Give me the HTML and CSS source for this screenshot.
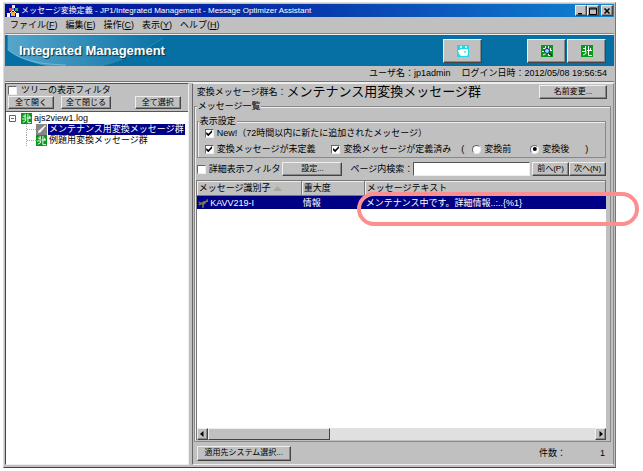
FILE: index.html
```html
<!doctype html>
<html lang="ja">
<head>
    <meta charset="UTF-8">
    <meta name="viewport" content="width=device-width, initial-scale=1.0">
    <title>メッセージ変換定義</title>

    <link rel="stylesheet" href="styles.css">
</head>
<body>

<svg class="defs" width="0" height="0">
    <symbol id="group" viewBox="0 0 12 12">
        <rect width="12" height="12" fill="#079a18"/>
        <path d="M2 3.500h3M4.500 1v5M1 6.500h4v2L2 10M7.500 1v9.500H11M6 5.500h5M9.500 3v3" stroke="#fff" fill="none"/>
    </symbol>
</svg>

<div class="window">
    <header class="titlebar">
        <svg class="app-icon" viewBox="0 0 12 12">
            <path d="M6 2v3M2 9l4-4 4 4" stroke="#eee" fill="none"/>
            <path d="M5 0h3v3H5z" fill="#f4e8b0"/>
            <path d="M2 3h3v3H2z" fill="#e04848"/>
            <path d="M8 3h3v3H8z" fill="#30b050"/>
            <path d="M0 8h3v4H0zM9 8h3v4H9z" fill="#fff"/>
            <path d="M4 7h4v4H4z" fill="#f0b030"/>
        </svg>
        <span class="title">メッセージ変換定義 - JP1/Integrated Management - Message Optimizer Assistant</span>
        <div class="window-buttons">
            <button aria-label="最小化"><svg viewBox="0 0 8 8"><path d="M1 6h4v1.500H1z"/></svg></button>
            <button aria-label="最大化"><svg viewBox="0 0 8 8"><path d="M.5 1h7v6.500h-7zM.5 2h7" fill="none" stroke="#000"/></svg></button>
            <button class="close" aria-label="閉じる"><svg viewBox="0 0 8 8"><path d="M1.500 1.500l5 5M6.500 1.500l-5 5" stroke="#000" stroke-width="1.500"/></svg></button>
        </div>
    </header>

    <nav class="menu">
        <button>ファイル(<u>F</u>)</button>
        <button>編集(<u>E</u>)</button>
        <button>操作(<u>C</u>)</button>
        <button>表示(<u>Y</u>)</button>
        <button>ヘルプ(<u>H</u>)</button>
    </nav>

    <div class="banner">
        <svg class="swoosh" viewBox="0 0 170 32">
            <defs>
                <linearGradient id="shine">
                    <stop offset="0" stop-color="#70b8d8"/>
                    <stop offset="1" stop-color="#0870a4"/>
                </linearGradient>
            </defs>
            <path d="M0 0h165C145 14 125 26 98 32H40C22 28 8 22 0 15z" fill="url(#shine)" opacity=".75"/>
            <path d="M0 15c12 10 28 15 60 16" stroke="#74b9d7" fill="none"/>
            <path d="M98 30c25-5 45-15 62-27" stroke="#2b88b5" fill="none"/>
        </svg>
        <h1>Integrated Management</h1>
        <div class="tools">
            <button class="camera" aria-label="取得">
                <svg viewBox="0 0 12 12">
                    <rect width="12" height="12" fill="#20d8e8"/>
                    <path d="M1 5h2l1-1h7v5l-1 2H4L2 9z" fill="#fff"/>
                    <path d="M8 1h2v2H8zM3 1h2v2H3z" fill="#c8ffff"/>
                    <circle cx="8" cy="7" r="1" fill="#62d8e8"/>
                </svg>
            </button>
            <button aria-label="検索">
                <svg viewBox="0 0 12 12">
                    <use href="#group"/>
                    <circle cx="6" cy="6" r="2.500" fill="#9cdcff" stroke="#102060"/>
                    <path d="M8 8l3 3" stroke="#102060" stroke-width="1.500"/>
                </svg>
            </button>
            <button aria-label="メッセージ群"><svg viewBox="0 0 12 12"><use href="#group"/></svg></button>
        </div>
    </div>

    <div class="session">
        <span>ユーザ名：jp1admin</span>
        <span>ログイン日時：2012/05/08 19:56:54</span>
    </div>

    <div class="panes">
        <aside class="tree-pane">
            <div class="tree-tools">
                <label><input type="checkbox">ツリーの表示フィルタ</label>
                <div class="tree-buttons">
                    <button>全て開く</button>
                    <button>全て閉じる</button>
                    <button class="select-all">全て選択</button>
                </div>
            </div>
            <ul class="tree">
                <li>
                    <div class="node">
                        <svg class="toggle" viewBox="0 0 7 7"><path d="M.5.5h6v6h-6zM2 3.500h3" fill="none" stroke="#666"/></svg>
                        <svg class="icon" viewBox="0 0 12 12"><use href="#group"/></svg>
                        <span>ajs2view1.log</span>
                    </div>
                    <ul>
                        <li class="node">
                            <svg class="icon" viewBox="0 0 12 12">
                                <rect width="12" height="12" fill="#858585"/>
                                <path d="M2 10l1-3 7-6 1 1-6 7z" fill="#f4f4f4"/>
                            </svg>
                            <span class="selected">メンテナンス用変換メッセージ群</span>
                        </li>
                        <li class="node">
                            <svg class="icon" viewBox="0 0 12 12"><use href="#group"/></svg>
                            <span>例題用変換メッセージ群</span>
                        </li>
                    </ul>
                </li>
            </ul>
        </aside>

        <main class="main-pane">
            <div class="group-name">
                <span>変換メッセージ群名：</span>
                <strong>メンテナンス用変換メッセージ群</strong>
                <button>名前変更...</button>
            </div>

            <fieldset class="list">
                <legend>メッセージ一覧</legend>

                <fieldset class="display">
                    <legend>表示設定</legend>
                    <label><input type="checkbox" checked>New!（72時間以内に新たに追加されたメッセージ）</label>
                    <div class="options">
                        <label><input type="checkbox" checked>変換メッセージが未定義</label>
                        <label><input type="checkbox" checked>変換メッセージが定義済み</label>
                        <div class="sides">
                            <span>(</span>
                            <label><input type="radio" name="side">変換前</label>
                            <label class="after"><input type="radio" name="side" checked>変換後</label>
                            <span>)</span>
                        </div>
                    </div>
                </fieldset>

                <div class="search">
                    <label><input type="checkbox">詳細表示フィルタ</label>
                    <button class="setting">設定...</button>
                    <label for="find">ページ内検索：</label>
                    <input type="text" id="find">
                    <button>前へ(P)</button>
                    <button>次へ(N)</button>
                </div>

                <div class="messages">
                    <table>
                        <thead>
                        <tr>
                            <th class="col-id">メッセージ識別子 <i class="sort"></i></th>
                            <th class="col-level">重大度</th>
                            <th>メッセージテキスト</th>
                        </tr>
                        </thead>
                        <tbody>
                        <tr>
                            <td>
                                <svg class="wrench" viewBox="0 0 12 10"><path d="M0 3h2l2 1 3-2h2l2-2h1v3l-3 1v2H7v4H5V6L2 7H0l2-2z" fill="#75775c"/></svg>
                                KAVV219-I
                            </td>
                            <td>情報</td>
                            <td class="marked">メンテナンス中です。詳細情報..:..{%1}</td>
                        </tr>
                        </tbody>
                    </table>
                    <div class="scrollbar">
                        <button aria-label="左へ"><svg viewBox="0 0 8 8"><path d="M5.500 1v6L2 4z"/></svg></button>
                        <div class="thumb"></div>
                        <button class="right" aria-label="右へ"><svg viewBox="0 0 8 8"><path d="M2.500 1v6L6 4z"/></svg></button>
                    </div>
                </div>
            </fieldset>

            <footer>
                <button>適用先システム選択...</button>
                <span class="count">件数：</span>
                <span>1</span>
            </footer>
        </main>
    </div>
</div>

</body>
</html>
```
FILE: styles.css
```css
*,
*::before,
*::after {
    box-sizing: border-box;
}

body {
    margin: 0;
    padding: 2px 27px 3px 3px;
    background: #fff;
    color: #000;
    font: 9px/12px "Liberation Sans", "Noto Sans CJK JP", sans-serif;
    white-space: nowrap;
}

.defs {
    position: absolute;
}

svg {
    display: block;
    flex: none;
}

button {
    display: flex;
    align-items: center;
    justify-content: center;
    height: 14px;
    margin: 0;
    padding: 0 4px;
    border: 1px solid;
    border-color: #eee #444 #444 #eee;
    box-shadow: inset -1px -1px #888;
    background: #c0c0c0;
    color: #000;
    font: inherit;
    font-size: 8px;
    white-space: nowrap;
}

label {
    display: flex;
    align-items: center;
}

input[type=checkbox],
input[type=radio] {
    appearance: none;
    flex: none;
    width: 9px;
    height: 9px;
    margin: 0 3px 0 0;
    border: 1px solid;
    border-color: #666 #eee #eee #666;
    background: #fff;
}

input[type=radio] {
    border-radius: 50%;
}

input:checked::before {
    content: "";
    display: block;
    width: 7px;
    height: 7px;
    background: #000;
    clip-path: polygon(8% 35%, 38% 62%, 92% 8%, 92% 40%, 38% 95%, 8% 68%);
}

input[type=radio]:checked::before {
    clip-path: circle(2px);
}

.window {
    display: flex;
    flex-direction: column;
    min-height: calc(100vh - 5px);
    padding: 1px 1px 2px 1px;
    border: 1px solid;
    border-color: #ddd #777 #444 #ddd;
    background: #c0c0c0;
}

/* title bar and menu */

.titlebar {
    display: flex;
    align-items: center;
    height: 13px;
    padding: 0 1px 0 2px;
    background: linear-gradient(90deg, #000c98, #0838ac 50%, #1084d0);
    color: #fff;
}

.app-icon {
    width: 12px;
    height: 12px;
    margin-right: 2px;
}

.title {
    font-size: 8px;
}

.window-buttons {
    display: flex;
    margin-left: auto;
}

.window-buttons button {
    width: 12px;
    height: 11px;
    padding: 0;
}

.window-buttons .close {
    margin-left: 2px;
}

.window-buttons svg,
.scrollbar svg {
    width: 8px;
    height: 8px;
}

.menu {
    display: flex;
    gap: 8px;
    height: 17px;
    padding: 1px 5px;
    border-bottom: 1px solid #888;
    box-shadow: 0 1px #eee;
}

.menu button {
    padding: 0;
    border: 0;
    box-shadow: none;
    font-size: 9px;
}

/* banner */

.banner {
    position: relative;
    display: flex;
    align-items: center;
    height: 31px;
    margin-top: 1px;
    padding: 0 8px 0 14px;
    background: #0670a4;
}

.swoosh {
    position: absolute;
    left: 0;
    top: 0;
    width: 170px;
    height: 31px;
}

h1 {
    position: relative;
    margin: 0;
    color: #fff;
    font-size: 13px;
    line-height: 30px;
    text-shadow: 1px 1px 1px #034;
}

.tools {
    display: flex;
    gap: 1px;
    margin-left: auto;
}

.tools button {
    width: 39px;
    height: 24px;
}

.tools .camera {
    margin-right: 44px;
}

.tools svg {
    width: 12px;
    height: 12px;
}

.session {
    display: flex;
    justify-content: flex-end;
    gap: 11px;
    height: 16px;
    padding: 1px 7px 0 0;
    border-bottom: 1px solid #777;
}

/* panes */

.panes {
    display: flex;
    flex: 1;
    border-top: 1px solid #eee;
}

.tree-pane {
    display: flex;
    flex-direction: column;
    flex: 0 0 30%;
    border: 1px solid;
    border-color: #555 #eee #eee #444;
}

.tree-tools {
    height: 28px;
    padding-left: 2px;
    border-bottom: 1px solid #555;
}

.tree-tools input {
    margin-right: 4px;
}

.tree-buttons {
    display: flex;
    gap: 7px;
    padding-right: 7px;
}

.tree-buttons .select-all {
    margin-left: auto;
}

.tree-buttons button {
    min-width: 46px;
    height: 13px;
}

.tree {
    flex: 1;
    padding: 1px 3px;
    background: #fff;
}

.tree,
.tree ul {
    margin: 0;
    list-style: none;
}

.tree ul {
    margin-left: 17px;
    padding: 0;
}

.node {
    display: flex;
    align-items: center;
    height: 11px;
}

.tree span {
    margin-left: 1px;
    padding: 0 1px;
    line-height: 11px;
}

.tree .selected {
    background: #000084;
    color: #fff;
}

.tree ul .node {
    border-left: 1px dotted #aaa;
}

.tree ul .node::before {
    content: "";
    width: 9px;
    border-top: 1px dotted #aaa;
}

.toggle {
    width: 7px;
    height: 7px;
    margin-right: 5px;
}

.icon {
    width: 11px;
    height: 11px;
}

.main-pane {
    display: flex;
    flex-direction: column;
    flex: 1;
    min-width: 0;
    margin-left: 3px;
    border: 1px solid;
    border-color: #eee #888 #eee #666;
}

.group-name {
    display: flex;
    align-items: center;
    height: 16px;
    padding: 0 6px 0 4px;
}

.group-name strong {
    font-size: 13px;
    font-weight: 400;
}

.group-name button {
    width: 68px;
    margin-left: auto;
}

fieldset {
    min-width: 0;
    margin: 0;
    padding: 0;
    border: 1px solid #888;
    box-shadow: inset 1px 1px #eee;
}

legend {
    margin-left: 2px;
    padding: 0 1px;
    background: #c0c0c0;
}

.list {
    display: flex;
    flex-direction: column;
    flex: 1;
    margin: 0 2px 0 1px;
}

.display {
    margin: 3px 4px 0 2px;
    padding: 0 0 2px 7px;
}

.display legend {
    margin-left: -6px;
}

.options {
    display: flex;
    align-items: center;
    gap: 16px;
    margin-top: 4px;
}

.sides {
    display: flex;
    align-items: center;
    gap: 8px;
    margin-left: -6px;
}

.sides .after {
    margin: 0 8px 0 11px;
}

.search {
    display: flex;
    align-items: center;
    height: 18px;
    margin: 2px 4px 2px 2px;
}

.search .setting {
    width: 60px;
    margin: 0 8px 0 2px;
}

.search input[type=text] {
    flex: 1;
    min-width: 0;
    height: 14px;
    margin-right: 2px;
    border: 1px solid;
    border-color: #555 #eee #eee #555;
    background: #fff;
    font: inherit;
}

.search button {
    width: 37px;
    padding: 0;
}

.messages {
    display: flex;
    flex-direction: column;
    flex: 1;
    margin: 0 4px 1px 1px;
    background: #fff;
    border-top: 1px solid #777;
    border-left: 1px solid #777;
}

table {
    width: 100%;
    border-collapse: separate;
    border-spacing: 0;
    table-layout: fixed;
}

th {
    height: 15px;
    padding: 0 2px;
    border-right: 1px solid #777;
    border-bottom: 1px solid #777;
    box-shadow: inset 1px 1px #eee;
    background: #c0c0c0;
    font-weight: 400;
    text-align: left;
}

.col-id {
    width: 105px;
}

.col-level {
    width: 63px;
}

.sort {
    display: inline-block;
    width: 9px;
    height: 5px;
    background: #aaa69c;
    clip-path: polygon(50% 0, 100% 100%, 0 100%);
}

td {
    height: 13px;
    padding: 0 1px;
    background: #000084;
    color: #fff;
}

.wrench {
    display: inline-block;
    width: 10px;
    height: 9px;
    vertical-align: middle;
}

/* highlight round the message text */
.marked {
    position: relative;
}

.marked::after {
    content: "";
    position: absolute;
    top: -4px;
    left: -8px;
    right: -33px;
    height: 34px;
    border: 4px solid #fc9090;
    border-radius: 17px;
}

.scrollbar {
    display: flex;
    height: 12px;
    margin-top: auto;
    background: #e0e0e0;
}

.scrollbar button {
    width: 11px;
    height: 12px;
    padding: 0;
}

.scrollbar .right {
    margin-left: auto;
}

.thumb {
    width: 30%;
    border: 1px solid;
    border-color: #eee #444 #444 #eee;
    background: #c0c0c0;
}

footer {
    display: flex;
    align-items: center;
    height: 22px;
    padding: 0 8px 0 4px;
}

footer button {
    width: 94px;
    height: 15px;
}

.count {
    margin: 0 34px 0 auto;
}
```
